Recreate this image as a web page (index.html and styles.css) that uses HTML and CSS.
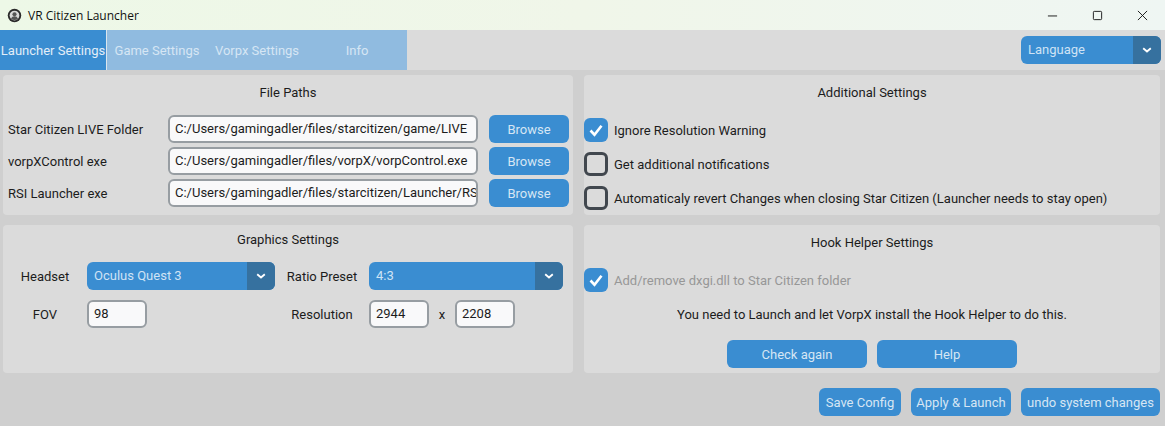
FILE: index.html
```html
<!DOCTYPE html>
<html lang="en">
<head>
<meta charset="utf-8">
<title>VR Citizen Launcher</title>
<link rel="stylesheet" href="styles.css">
</head>
<body>
<div class="window">
  <header class="titlebar">
    <svg class="app-icon" viewBox="0 0 16 16" aria-hidden="true">
      <circle cx="8" cy="8" r="7.2" fill="#2b2b2b"/>
      <circle cx="8" cy="8" r="5.2" fill="#d9d9d9"/>
      <circle cx="8" cy="6.6" r="2.2" fill="#555"/>
      <path d="M4.2 11.6c.8-2 2.2-2.8 3.8-2.8s3 .8 3.8 2.8c-2 1.5-5.6 1.5-7.6 0z" fill="#555"/>
    </svg>
    <span class="app-title">VR Citizen Launcher</span>
    <div class="win-controls">
      <button class="win-btn"><svg viewBox="0 0 12 12" aria-hidden="true"><path d="M1 6.5h10" stroke="#111" stroke-width="1" fill="none"/></svg></button>
      <button class="win-btn"><svg viewBox="0 0 12 12" aria-hidden="true"><rect x="1.5" y="1.5" width="9" height="9" rx="1" stroke="#111" stroke-width="1" fill="none"/></svg></button>
      <button class="win-btn"><svg viewBox="0 0 12 12" aria-hidden="true"><path d="M1 1l10 10M11 1L1 11" stroke="#111" stroke-width="1" fill="none"/></svg></button>
    </div>
  </header>

  <nav class="tabbar">
    <div class="tabs">
      <button class="tab tab-active">Launcher Settings</button>
      <button class="tab">Game Settings</button>
      <button class="tab">Vorpx Settings</button>
      <button class="tab">Info</button>
    </div>
    <div class="select select-lang">
      <span class="select-value">Language</span>
      <span class="select-arrow"><svg viewBox="0 0 10 6" aria-hidden="true"><path d="M1.2 1.2L5 4.4l3.8-3.2" stroke="#fff" stroke-width="1.9" fill="none"/></svg></span>
    </div>
  </nav>

  <main class="content">
    <section class="panel panel-files">
      <h2 class="panel-title">File Paths</h2>
      <div class="file-grid">
        <label class="label">Star Citizen LIVE Folder</label>
        <div class="input">C:/Users/gamingadler/files/starcitizen/game/LIVE</div>
        <button class="btn">Browse</button>
        <label class="label">vorpXControl exe</label>
        <div class="input">C:/Users/gamingadler/files/vorpX/vorpControl.exe</div>
        <button class="btn">Browse</button>
        <label class="label">RSI Launcher exe</label>
        <div class="input">C:/Users/gamingadler/files/starcitizen/Launcher/RSI Launcher.exe</div>
        <button class="btn">Browse</button>
      </div>
    </section>

    <section class="panel panel-additional">
      <h2 class="panel-title">Additional Settings</h2>
      <div class="check-list">
        <div class="check-row">
          <span class="check check-on"><svg viewBox="0 0 24 24" aria-hidden="true"><path d="M6.5 12.5l4 4.2 7-9" stroke="#fff" stroke-width="2.6" fill="none"/></svg></span>
          <span>Ignore Resolution Warning</span>
        </div>
        <div class="check-row">
          <span class="check"></span>
          <span>Get additional notifications</span>
        </div>
        <div class="check-row">
          <span class="check"></span>
          <span>Automaticaly revert Changes when closing Star Citizen (Launcher needs to stay open)</span>
        </div>
      </div>
    </section>

    <section class="panel panel-graphics">
      <h2 class="panel-title">Graphics Settings</h2>
      <div class="gfx-grid">
        <span class="gfx-label">Headset</span>
        <div class="select">
          <span class="select-value">Oculus Quest 3</span>
          <span class="select-arrow"><svg viewBox="0 0 10 6" aria-hidden="true"><path d="M1.2 1.2L5 4.4l3.8-3.2" stroke="#fff" stroke-width="1.9" fill="none"/></svg></span>
        </div>
        <span class="gfx-label">Ratio Preset</span>
        <div class="select">
          <span class="select-value">4:3</span>
          <span class="select-arrow"><svg viewBox="0 0 10 6" aria-hidden="true"><path d="M1.2 1.2L5 4.4l3.8-3.2" stroke="#fff" stroke-width="1.9" fill="none"/></svg></span>
        </div>
        <span class="gfx-label">FOV</span>
        <div class="gfx-field"><div class="input input-small">98</div></div>
        <span class="gfx-label">Resolution</span>
        <div class="gfx-field">
          <div class="input input-small">2944</div>
          <span class="times">x</span>
          <div class="input input-small">2208</div>
        </div>
      </div>
    </section>

    <section class="panel panel-hook">
      <h2 class="panel-title">Hook Helper Settings</h2>
      <div class="check-row check-row-disabled">
        <span class="check check-on"><svg viewBox="0 0 24 24" aria-hidden="true"><path d="M6.5 12.5l4 4.2 7-9" stroke="#fff" stroke-width="2.6" fill="none"/></svg></span>
        <span>Add/remove dxgi.dll to Star Citizen folder</span>
      </div>
      <p class="hook-note">You need to Launch and let VorpX install the Hook Helper to do this.</p>
      <div class="hook-actions">
        <button class="btn btn-wide">Check again</button>
        <button class="btn btn-wide">Help</button>
      </div>
    </section>
  </main>

  <footer class="footer">
    <button class="btn btn-save">Save Config</button>
    <button class="btn btn-apply">Apply &amp; Launch</button>
    <button class="btn btn-undo">undo system changes</button>
  </footer>
</div>
</body>
</html>
```

FILE: styles.css
```css
* { box-sizing: border-box; }
html, body { margin: 0; height: 100%; overflow: hidden; }
body { font-family: Roboto, "Liberation Sans", sans-serif; font-size: 13px; color: #1c1c1c; background: #cfcfcf; }
button { font: inherit; border: 0; margin: 0; padding: 0; }

.window { width: 1165px; height: 426px; display: flex; flex-direction: column; background: #cfcfcf; }

.titlebar { height: 30px; flex: none; display: flex; align-items: center; padding-left: 7px; background: linear-gradient(90deg, #edf8e7 0%, #f0f6e9 50%, #eff6f3 100%); }
.app-icon { width: 15px; height: 15px; flex: none; }
.app-title { margin-left: 6px; font-family: "Open Sans", "Noto Sans", sans-serif; font-size: 12px; color: #111; }
.win-controls { margin-left: auto; display: flex; }
.win-btn { width: 45px; height: 30px; background: transparent; display: flex; align-items: center; justify-content: center; }
.win-btn svg { width: 11px; height: 11px; }

.tabbar { height: 40px; flex: none; display: flex; justify-content: space-between; align-items: center; background: #dbdbdb; padding-right: 4px; }
.tabs { display: flex; align-self: stretch; }
.tab { width: 100px; background: #90bbe0; color: #d6e6f4; }
.tab-active { width: 107px; background: #3a8dd1; color: #e3eef8; border-right: 1px solid #dbe6ee; }

.select { height: 28px; display: flex; background: #3a8dd1; border-radius: 6px; overflow: hidden; color: #cfe3f5; }
.select-lang { width: 140px; }
.select-value { flex: 1; padding-left: 7px; line-height: 28px; }
.select-arrow { width: 28px; background: #36719f; display: flex; align-items: center; justify-content: center; }
.select-arrow svg { width: 10px; height: 6px; }

.content { display: grid; grid-template-columns: 570px 576px; grid-template-rows: 140px 148px; gap: 10px 11px; padding: 5px 0 0 3px; }
.panel { background: #dbdbdb; border-radius: 4px; }
.panel-title { margin: 0; font-size: 13px; font-weight: 400; line-height: 16px; text-align: center; color: #1c1c1c; }

.panel-files { padding-top: 10px; }
.file-grid { display: grid; grid-template-columns: 160px 310px 80px; column-gap: 11px; row-gap: 4px; margin: 14px 0 0 5px; }
.file-grid .label { align-self: center; }
.file-grid .btn { height: 28px; }
.file-grid { column-gap: 0; }
.file-grid .btn { margin-left: 11px; width: 80px; }

.input { height: 28px; padding: 0 5px; background: #f9f9fa; border: 2px solid #979da2; border-radius: 6px; line-height: 24px; white-space: nowrap; overflow: hidden; color: #1c1c1c; }
.input-small { width: 60px; padding: 0 5px; }

.btn { height: 28px; background: #3a8dd1; color: #d6e6f4; border-radius: 6px; }

.panel-additional { padding-top: 10px; }
.check-list { display: flex; flex-direction: column; gap: 10px; margin-top: 17px; }
.check-row { display: flex; align-items: center; gap: 6px; height: 24px; }
.check { width: 24px; height: 24px; flex: none; border: 3px solid #41474e; border-radius: 6px; display: block; }
.check svg { display: block; width: 24px; height: 24px; }
.check-on { background: #3a8dd1; border: 0; }
.check-row-disabled { margin-top: 17px; color: #979797; }

.panel-graphics { padding-top: 7px; }
.gfx-grid { display: grid; grid-template-columns: 84px 188px 94px 194px; row-gap: 10px; margin-top: 14px; }
.gfx-label { text-align: center; align-self: center; }
.gfx-field { display: flex; align-items: center; }
.times { width: 26px; text-align: center; }

.panel-hook { padding-top: 10px; }
.hook-note { margin: 14px 0 0; line-height: 18px; text-align: center; color: #1c1c1c; }
.hook-actions { display: flex; justify-content: center; gap: 10px; margin-top: 16px; }
.btn-wide { width: 140px; }

.footer { display: flex; justify-content: flex-end; gap: 10px; padding: 15px 5px 0 0; }
.btn-save { width: 82px; }
.btn-apply { width: 100px; }
.btn-undo { width: 139px; }
```
